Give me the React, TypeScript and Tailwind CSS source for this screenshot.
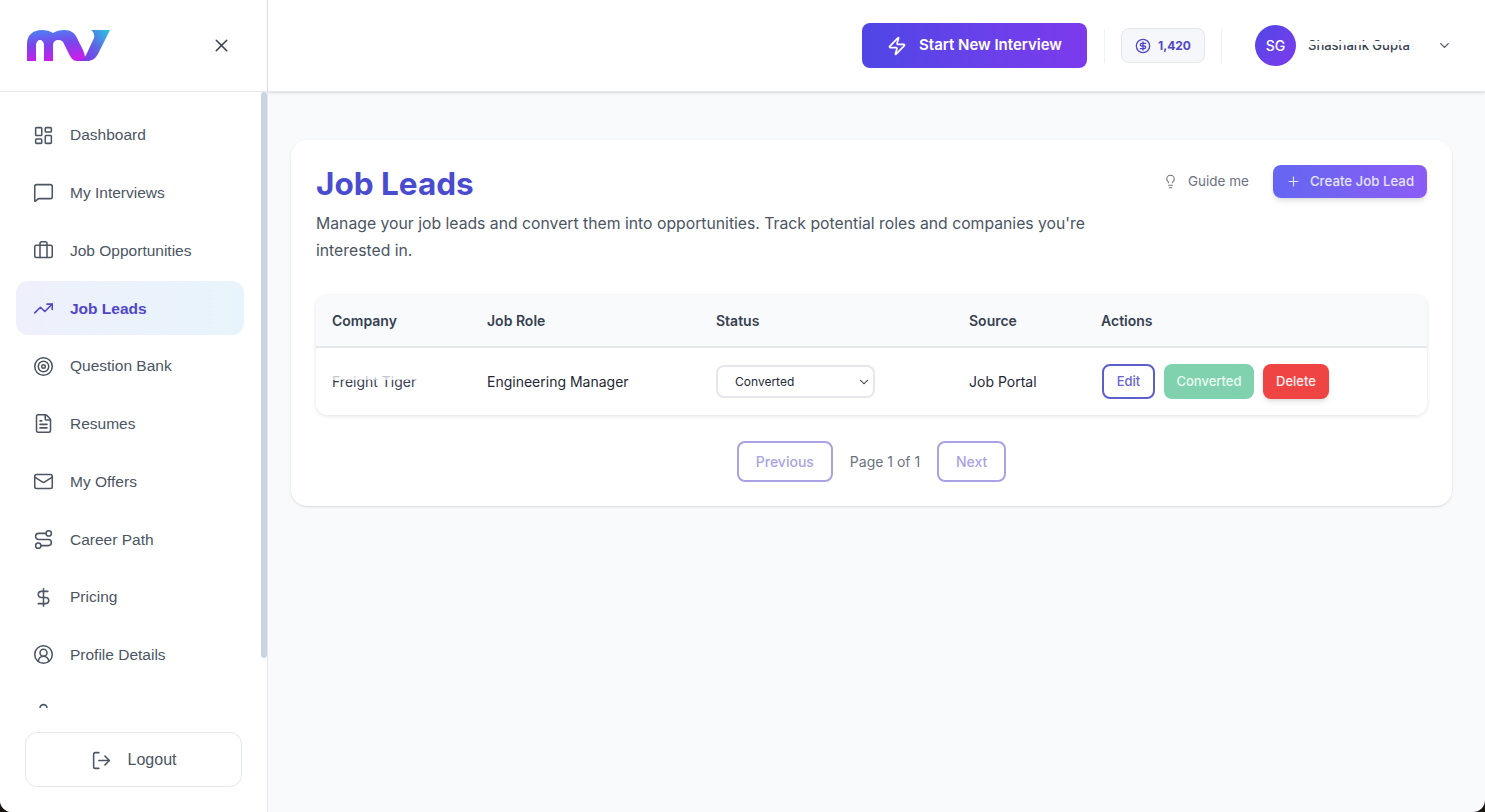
import {
  Briefcase,
  ChevronDown,
  CircleDollarSign,
  CircleUserRound,
  DollarSign,
  FileText,
  LayoutDashboard,
  Lightbulb,
  LogOut,
  Mail,
  MessageSquare,
  Plus,
  Route,
  Target,
  TrendingUp,
  User,
  X,
  Zap,
} from "lucide-react";

const NAV_ITEMS = [
  { label: "Dashboard", icon: LayoutDashboard },
  { label: "My Interviews", icon: MessageSquare },
  { label: "Job Opportunities", icon: Briefcase },
  { label: "Job Leads", icon: TrendingUp, active: true },
  { label: "Question Bank", icon: Target },
  { label: "Resumes", icon: FileText },
  { label: "My Offers", icon: Mail },
  { label: "Career Path", icon: Route },
  { label: "Pricing", icon: DollarSign },
  { label: "Profile Details", icon: CircleUserRound },
  { label: "My Account", icon: User },
];

function Logo() {
  return (
    <svg width="83" height="31" viewBox="0 0 83 31" fill="none">
      <defs>
        <linearGradient id="mv" x1="0" y1="0" x2="0.15" y2="1">
          <stop offset="0" stopColor="#4a86f2" />
          <stop offset="0.5" stopColor="#7a45ec" />
          <stop offset="1" stopColor="#c422ea" />
        </linearGradient>
        <linearGradient id="mv2" x1="0" y1="0.9" x2="1" y2="0.1">
          <stop offset="0" stopColor="#8a2fe6" />
          <stop offset="0.5" stopColor="#5f63e6" />
          <stop offset="1" stopColor="#2cc0e2" />
        </linearGradient>
      </defs>
      <path
        d="M0 31V14C0 5 6 0 15 0C19 0 23 1 26 3C29 1 33 0 37 0C44 0 48 3 50 8L56 20C58 25 59 31 60 31H50C46 31 44 28 42 24L37 14C36 11 34 10 32 10C28 10 26 12 26 15V31H17V15C17 12 15 10 13 10C11 10 9 12 9 15V31Z"
        fill="url(#mv)"
      />
      <path
        d="M64 0H83L71 24C68 29 65 31 60 31H50C55 31 58 28 60 23L67 8C68 5 66 1 64 0Z"
        fill="url(#mv2)"
      />
    </svg>
  );
}

function Sidebar() {
  return (
    <aside className="flex w-[268px] shrink-0 flex-col border-r border-[#e5e7eb] bg-white font-['Liberation_Sans',sans-serif]">
      <div className="flex h-[92px] shrink-0 items-center justify-between border-b border-[#e5e7eb] pl-[27px] pr-[35px]">
        <Logo />
        <X className="h-[21px] w-[21px] text-[#374151]" strokeWidth={1.75} />
      </div>
      <div className="relative min-h-0 flex-1">
        <nav className="flex h-[616px] flex-col gap-[3.75px] overflow-hidden pl-4 pr-[23px] pt-[16px]">
          {NAV_ITEMS.map((item) => (
            <div
              key={item.label}
              className={
                item.active
                  ? "flex h-[54px] shrink-0 items-center gap-[16px] rounded-xl bg-gradient-to-r from-[#eef0fb] to-[#e8f4fb] pl-[17px] font-bold text-[#4f46c8]"
                  : "flex h-[54px] shrink-0 items-center gap-[16px] rounded-xl pl-[17px] text-[#4b5563]"
              }
            >
              <item.icon className="h-[21px] w-[21px] shrink-0" strokeWidth={1.75} />
              <span className="text-[15.5px]">{item.label}</span>
            </div>
          ))}
        </nav>
        <div className="absolute left-[261px] top-0 h-[566px] w-[6px] rounded-full bg-[#cbd5e1]" />
        <div className="absolute bottom-[25px] left-[25px] flex h-[55px] w-[217px] items-center justify-center gap-[16px] rounded-xl border border-[#e5e7eb] bg-white pt-[1px] text-[16px] text-[#4b5563]">
          <LogOut className="h-[21px] w-[21px]" strokeWidth={1.75} />
          Logout
        </div>
      </div>
    </aside>
  );
}

function Header() {
  return (
    <header className="flex h-[92px] shrink-0 items-center justify-end border-b border-[#e5e7eb] bg-white pr-[33px] shadow-sm">
      <button className="flex h-[45px] w-[225px] items-center justify-center gap-[12px] rounded-lg bg-gradient-to-r from-[#4f46e5] to-[#7c3aed] text-[15px] font-semibold text-white">
        <Zap className="h-[20px] w-[20px]" strokeWidth={2} />
        Start New Interview
      </button>
      <div className="ml-[17px] h-[34px] w-px bg-[#f0f1f3]" />
      <div className="ml-[16px] flex h-[35px] w-[84px] items-center justify-center gap-[7px] rounded-lg border border-[#e5e7eb] bg-[#f5f7fb] text-[12px] font-bold text-[#4f46c8]">
        <CircleDollarSign className="h-[16px] w-[16px]" strokeWidth={2} />
        1,420
      </div>
      <div className="ml-[16px] h-[34px] w-px bg-[#f0f1f3]" />
      <div className="ml-[33px] flex h-[41px] w-[41px] items-center justify-center rounded-full bg-gradient-to-br from-[#4f46e5] to-[#7c3aed] text-[14px] font-medium text-white">
        SG
      </div>
      <div className="relative ml-[12px] w-[101px] whitespace-nowrap text-[13px] font-medium text-[#374151]">
        Shashank Gupta
        <div className="absolute inset-x-0 top-[5px] h-[4px] bg-white/90" />
      </div>
      <ChevronDown className="ml-[28px] h-[15px] w-[15px] text-[#4b5563]" strokeWidth={2} />
    </header>
  );
}

function JobLeadsCard() {
  return (
    <section className="rounded-2xl bg-white px-[25px] pb-[24px] pt-[25px] shadow-sm">
      <div className="flex items-start justify-between">
        <div className="w-[800px]">
          <h1 className="text-[31.5px] font-bold leading-[38px] text-[#4a4cd0]">Job Leads</h1>
          <p className="mt-[7px] text-[15.75px] leading-[27px] text-[#4b5563]">
            Manage your job leads and convert them into opportunities. Track potential roles and
            companies you're interested in.
          </p>
        </div>
        <div className="flex items-center">
          <div className="flex items-center gap-[10px] text-[13.5px] text-[#6b7280]">
            <Lightbulb className="h-[15px] w-[15px]" strokeWidth={1.75} />
            Guide me
          </div>
          <button className="ml-[24px] flex h-[33px] w-[154px] items-center justify-center gap-[9px] rounded-lg bg-gradient-to-r from-[#6366f1] to-[#8b5cf6] text-[13.25px] font-medium text-[#e4e6ff] shadow-md">
            <Plus className="h-[15px] w-[15px]" strokeWidth={1.75} />
            Create Job Lead
          </button>
        </div>
      </div>

      <div className="mt-[31px] overflow-hidden rounded-xl shadow-[0_1px_4px_rgba(0,0,0,0.12)]">
        <table className="w-full table-fixed border-collapse text-left text-[14px]">
          <thead>
            <tr className="h-[52px] border-b-2 border-[#e5e7eb] bg-[#f8fafb] text-[#374151]">
              <th className="w-[171px] pl-[16px] font-semibold">Company</th>
              <th className="w-[229px] font-semibold">Job Role</th>
              <th className="w-[253px] font-semibold">Status</th>
              <th className="w-[132px] font-semibold">Source</th>
              <th className="font-semibold">Actions</th>
            </tr>
          </thead>
          <tbody>
            <tr className="h-[68px] bg-white text-[#1f2937]">
              <td className="pl-[16px]">
                <div className="relative w-[84px] whitespace-nowrap text-[#374151]">
                  Freight Tiger
                  <div className="absolute inset-x-0 top-[4px] h-[5px] bg-white/70" />
                </div>
              </td>
              <td>Engineering Manager</td>
              <td>
                <div className="flex h-[33px] w-[159px] items-center justify-between rounded-lg border-2 border-[#e5e7eb] bg-white pl-[17px] pr-[2px] text-[12px] font-normal text-[#1f2937]">
                  Converted
                  <ChevronDown className="h-[14px] w-[14px]" strokeWidth={1.75} />
                </div>
              </td>
              <td>Job Portal</td>
              <td>
                <div className="flex items-center gap-[9px] pl-[1px] text-[13px] font-medium">
                  <button className="h-[35px] w-[53px] rounded-lg border-2 border-[#5b5fc7] text-[#6a64d0]">
                    Edit
                  </button>
                  <button className="h-[35px] w-[90px] rounded-lg bg-[#80d2ae] text-[#eafaf3]">
                    Converted
                  </button>
                  <button className="h-[35px] w-[66px] rounded-lg bg-[#ef4444] text-[#fff1f1] shadow-md">
                    Delete
                  </button>
                </div>
              </td>
            </tr>
          </tbody>
        </table>
      </div>

      <div className="mt-[26px] flex items-center justify-center text-[14px]">
        <button className="h-[41px] w-[96px] rounded-lg border-2 border-[#a9a3e3] font-medium text-[#a9a3e3]">
          Previous
        </button>
        <span className="ml-[17px] text-[#6b7280]">Page 1 of 1</span>
        <button className="ml-[17px] h-[41px] w-[69px] rounded-lg border-2 border-[#a9a3e3] font-medium text-[#a9a3e3]">
          Next
        </button>
      </div>
    </section>
  );
}

export default function App() {
  return (
    <div className="h-[812px] w-[1485px] bg-[#1a1410]">
      <div className="flex h-full w-full overflow-hidden rounded-b-[12px] bg-[#f9fafb] font-['Inter',sans-serif]">
        <Sidebar />
        <div className="flex min-w-0 flex-1 flex-col">
          <Header />
          <main className="pl-[23px] pr-[33px] pt-[48px]">
            <JobLeadsCard />
          </main>
        </div>
      </div>
    </div>
  );
}
